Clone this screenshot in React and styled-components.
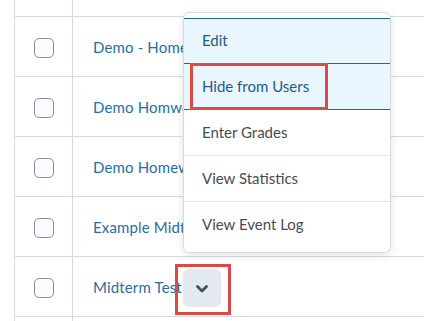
import React from 'react';
import styled, { createGlobalStyle } from 'styled-components';

const GlobalStyle = createGlobalStyle`
  body {
    margin: 0;
    background: #ffffff;
    font-family: 'Lato', 'Open Sans', sans-serif;
  }
`;

const rows = [
  { name: '', partial: true },
  { name: 'Demo - Homework 1' },
  { name: 'Demo Homwork 2' },
  { name: 'Demo Homework 3' },
  { name: 'Example Midterm' },
  { name: 'Midterm Test', menuButton: true },
  { name: '', partial: true },
];

const menuItems = [
  { label: 'Edit', active: true },
  { label: 'Hide from Users', active: true, marked: true },
  { label: 'Enter Grades' },
  { label: 'View Statistics' },
  { label: 'View Event Log' },
];

function App() {
  return (
    <Page>
      <GlobalStyle />
      <Table>
        {rows.map((row, i) => (
          <Row key={i} $partial={row.partial} $first={i === 0}>
            <CheckCell>{!row.partial && <Checkbox />}</CheckCell>
            <NameCell>
              {row.name && <NameLink>{row.name}</NameLink>}
              {row.menuButton && (
                <>
                  <MenuButton>
                    <svg width="14" height="10" viewBox="0 0 14 10">
                      <path d="M2.5 2.5 L7 7 L11.5 2.5" fill="none" stroke="#494c4e" strokeWidth="2.8" strokeLinecap="round" strokeLinejoin="round" />
                    </svg>
                  </MenuButton>
                  <Highlight $left={174 - 72} $top={7} $width={56} $height={51} />
                </>
              )}
            </NameCell>
          </Row>
        ))}
      </Table>
      <Menu>
        {menuItems.map((item) => (
          <MenuItem key={item.label} $active={item.active}>
            {item.label}
            {item.marked && <Highlight $left={6} $top={-1} $width={138} $height={47} />}
          </MenuItem>
        ))}
      </Menu>
    </Page>
  );
}

export default App;

const Page = styled.div`
  position: relative;
  width: 424px;
  height: 321px;
  overflow: hidden;
`;

const Table = styled.div`
  margin-left: 14px;
  border-left: 1px solid #d6dbe2;
`;

const Row = styled.div`
  display: grid;
  grid-template-columns: 58px 1fr;
  box-sizing: border-box;
  height: ${(p) => (p.$first ? '17px' : p.$partial ? '10px' : '60px')};
  border-bottom: ${(p) => (p.$partial && !p.$first ? 'none' : '1px solid #d6dbe2')};
`;

const CheckCell = styled.div`
  display: flex;
  align-items: center;
  justify-content: center;
  border-right: 1px solid #d6dbe2;
`;

const Checkbox = styled.div`
  box-sizing: border-box;
  width: 20px;
  height: 20px;
  margin-top: 2px;
  border: 1px solid #8e9296;
  border-radius: 5px;
  background: #f9fbff;
`;

const NameCell = styled.div`
  position: relative;
  display: flex;
  align-items: center;
  padding-left: 20px;
  white-space: nowrap;
`;

const NameLink = styled.span`
  display: block;
  max-width: 90px;
  overflow: hidden;
  font-size: 15px;
  color: #2a6d9f;
  letter-spacing: 0.15px;
`;

const MenuButton = styled.div`
  position: absolute;
  left: ${182 - 72}px;
  top: 12px;
  width: 38px;
  height: 38px;
  border-radius: 6px;
  background: #e3e9f1;
  display: flex;
  align-items: center;
  justify-content: center;
  svg {
    margin-top: 1px;
  }
`;

const Highlight = styled.div`
  position: absolute;
  box-sizing: border-box;
  left: ${(p) => p.$left}px;
  top: ${(p) => p.$top}px;
  width: ${(p) => p.$width}px;
  height: ${(p) => p.$height}px;
  border: 3px solid #dc4a47;
  pointer-events: none;
`;

const Menu = styled.div`
  position: absolute;
  left: 183px;
  top: 12px;
  width: 208px;
  height: 241px;
  box-sizing: border-box;
  padding-top: 5px;
  background: #ffffff;
  border: 1px solid #d6dbe2;
  border-radius: 7px;
  box-shadow: 0 2px 10px rgba(0, 0, 0, 0.12);
  display: flex;
  flex-direction: column;
`;

const MenuItem = styled.div`
  position: relative;
  box-sizing: border-box;
  height: 46px;
  flex-shrink: 0;
  display: flex;
  align-items: center;
  padding-left: 18px;
  padding-bottom: 2px;
  font-size: 15px;
  color: ${(p) => (p.$active ? '#1f5a86' : '#494c4e')};
  background: ${(p) => (p.$active ? '#eaf6fe' : '#ffffff')};
  border-top: ${(p) => (p.$active ? '1px solid #1d6a8f' : 'none')};
  border-bottom: 1px solid ${(p) => (p.$active ? '#1d6a8f' : '#e3e6ea')};
  & + & {
    border-top: none;
  }
  &:last-child {
    border-bottom: none;
  }
`;
